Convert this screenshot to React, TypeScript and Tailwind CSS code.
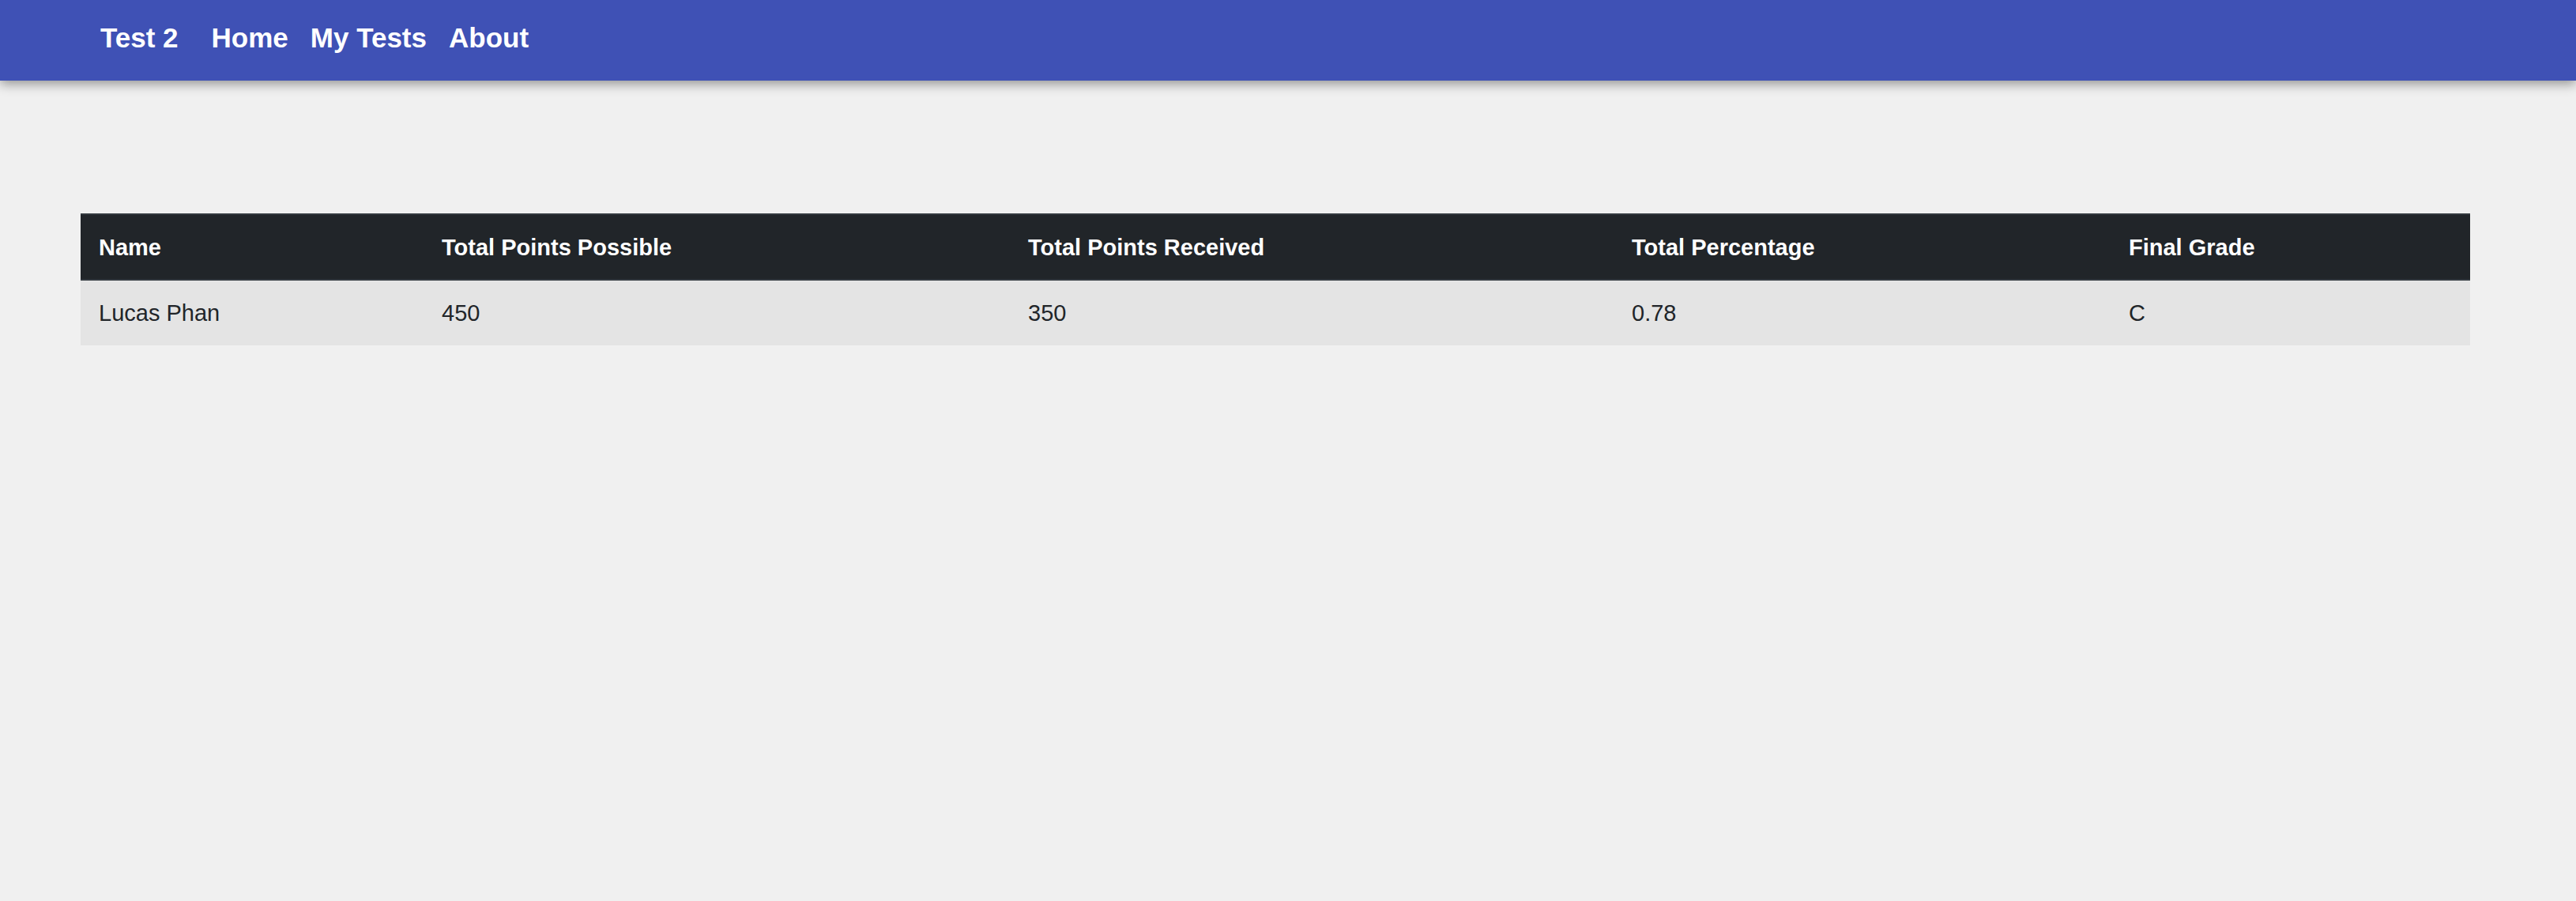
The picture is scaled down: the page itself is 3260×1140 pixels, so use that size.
import React from "react";

const columns = ["Name", "Total Points Possible", "Total Points Received", "Total Percentage", "Final Grade"];
const rows = [["Lucas Phan", "450", "350", "0.78", "C"]];

const App = () => {
  return (
    <div className="min-h-screen bg-[#f0f0f0] font-['Liberation_Sans',Arial,sans-serif]">
      <nav className="relative z-10 flex h-[102px] items-center bg-[#3f51b5] pl-[127px] pb-[6px] shadow-[0_4px_14px_rgba(0,0,0,0.4)]">
        <span className="mr-[42px] text-[35px] font-bold text-white">Test 2</span>
        <a className="mr-[28px] text-[35px] font-bold text-white">Home</a>
        <a className="mr-[28px] text-[35px] font-bold text-white">My Tests</a>
        <a className="text-[35px] font-bold text-white">About</a>
      </nav>
      <div className="ml-[102px] mt-[168px] w-[3024px]">
        <div className="grid grid-cols-[434px_742px_764px_629px_455px] border-y-2 border-[#32383e] bg-[#212529] text-[29px] font-bold text-white">
          {columns.map((c) => (
            <div key={c} className="flex h-[81px] items-center px-[23px] pt-[2px]">
              {c}
            </div>
          ))}
        </div>
        {rows.map((r, i) => (
          <div key={i} className="grid grid-cols-[434px_742px_764px_629px_455px] bg-[#e4e4e4] text-[29px] text-[#212529]">
            {r.map((v, j) => (
              <div key={j} className="flex h-[82px] items-center px-[23px] pt-[2px]">
                {v}
              </div>
            ))}
          </div>
        ))}
      </div>
    </div>
  );
};

export default App;
